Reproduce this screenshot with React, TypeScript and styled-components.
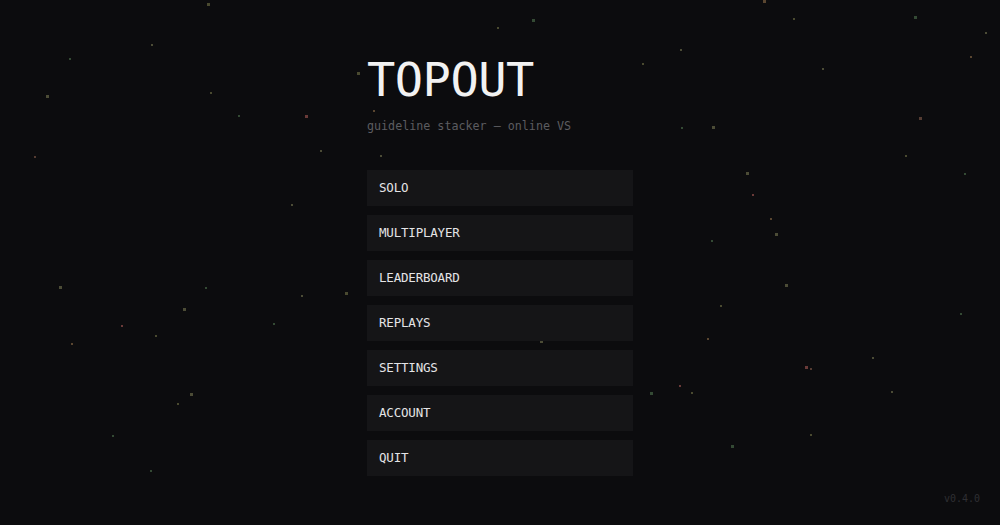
import styled, { createGlobalStyle } from 'styled-components';

const MONO = "'DejaVu Sans Mono', 'Liberation Mono', monospace";

const GlobalStyle = createGlobalStyle`
  html, body {
    margin: 0;
    padding: 0;
    background: #0c0c0e;
  }
  body {
    font-family: ${MONO};
  }
`;

const StyledPage = styled.div`
  position: relative;
  width: 100%;
  height: 100vh;
  min-height: 525px;
  overflow: hidden;
  background: #0c0c0e;
  display: flex;
  justify-content: center;
  box-sizing: border-box;
  padding-top: 52px;
`;

const StyledStarField = styled.div`
  position: absolute;
  inset: 0;
  pointer-events: none;
`;

const StyledStar = styled.span<{ color: string; size: number }>`
  position: absolute;
  width: ${({ size }) => size}px;
  height: ${({ size }) => size}px;
  background: ${({ color }) => color};
`;

const StyledMenu = styled.div`
  position: relative;
  z-index: 1;
  width: 266px;
  display: flex;
  flex-direction: column;
`;

const StyledTitle = styled.h1`
  margin: 0;
  font-family: ${MONO};
  font-weight: 400;
  font-size: 47px;
  line-height: 56px;
  color: #f2f2f2;
  letter-spacing: -0.5px;
`;

const StyledSubtitle = styled.div`
  margin-top: 10px;
  font-size: 11.7px;
  line-height: 16px;
  color: #5c5c60;
`;

const StyledButtonList = styled.div`
  margin-top: 36px;
  display: flex;
  flex-direction: column;
  gap: 9px;
`;

const StyledMenuButton = styled.button`
  height: 36px;
  width: 100%;
  display: flex;
  align-items: center;
  padding: 0 12px 2px;
  border: none;
  background: #151517;
  color: #e4e4e6;
  font-family: ${MONO};
  font-size: 12.5px;
  letter-spacing: -0.2px;
  text-align: left;
  cursor: pointer;
`;

const StyledVersion = styled.div`
  position: absolute;
  right: 20px;
  bottom: 21px;
  font-size: 10px;
  color: #2f2f33;
`;

const STAR_COLORS = ['#4a4a30', '#5a4630', '#6a3a38', '#344a34', '#4c4c36', '#553c32'];

const STARS: [number, number, number][] = [
  [207, 3, 0], [151, 44, 4], [69, 58, 3], [46, 95, 4], [210, 92, 0], [238, 115, 3],
  [305, 115, 2], [34, 156, 5], [291, 204, 4], [357, 72, 0], [373, 110, 1], [380, 155, 4],
  [532, 19, 3], [497, 27, 0], [680, 49, 4], [763, 0, 1], [793, 18, 0], [822, 68, 4],
  [914, 16, 3], [970, 56, 1], [985, 32, 4], [919, 117, 5], [905, 155, 0], [964, 173, 3],
  [746, 172, 4], [752, 194, 2], [770, 218, 1], [775, 233, 4], [711, 240, 3], [720, 305, 0],
  [785, 284, 4], [960, 313, 3], [872, 357, 4], [805, 366, 2], [810, 368, 5], [707, 338, 1],
  [650, 392, 3], [679, 385, 2], [691, 392, 0], [731, 445, 3], [810, 434, 0], [891, 391, 4],
  [59, 286, 4], [121, 325, 2], [155, 335, 0], [183, 308, 4], [273, 323, 3], [301, 295, 4],
  [345, 292, 0], [205, 287, 3], [71, 343, 1], [190, 393, 4], [112, 435, 3], [177, 403, 0],
  [540, 340, 4], [681, 127, 3], [642, 63, 0], [712, 126, 4], [320, 150, 4], [150, 470, 3],
];

const MENU_ITEMS = ['SOLO', 'MULTIPLAYER', 'LEADERBOARD', 'REPLAYS', 'SETTINGS', 'ACCOUNT', 'QUIT'];

const App = () => {
  return (
    <>
      <GlobalStyle />
      <StyledPage>
        <StyledStarField>
          {STARS.map(([x, y, c], i) => (
            <StyledStar
              key={i}
              color={STAR_COLORS[c]}
              size={i % 3 === 0 ? 3 : 2}
              style={{ left: x, top: y }}
            />
          ))}
        </StyledStarField>

        <StyledMenu>
          <StyledTitle>TOPOUT</StyledTitle>
          <StyledSubtitle>guideline stacker — online VS</StyledSubtitle>
          <StyledButtonList>
            {MENU_ITEMS.map((item) => (
              <StyledMenuButton key={item}>{item}</StyledMenuButton>
            ))}
          </StyledButtonList>
        </StyledMenu>

        <StyledVersion>v0.4.0</StyledVersion>
      </StyledPage>
    </>
  );
};

export default App;
